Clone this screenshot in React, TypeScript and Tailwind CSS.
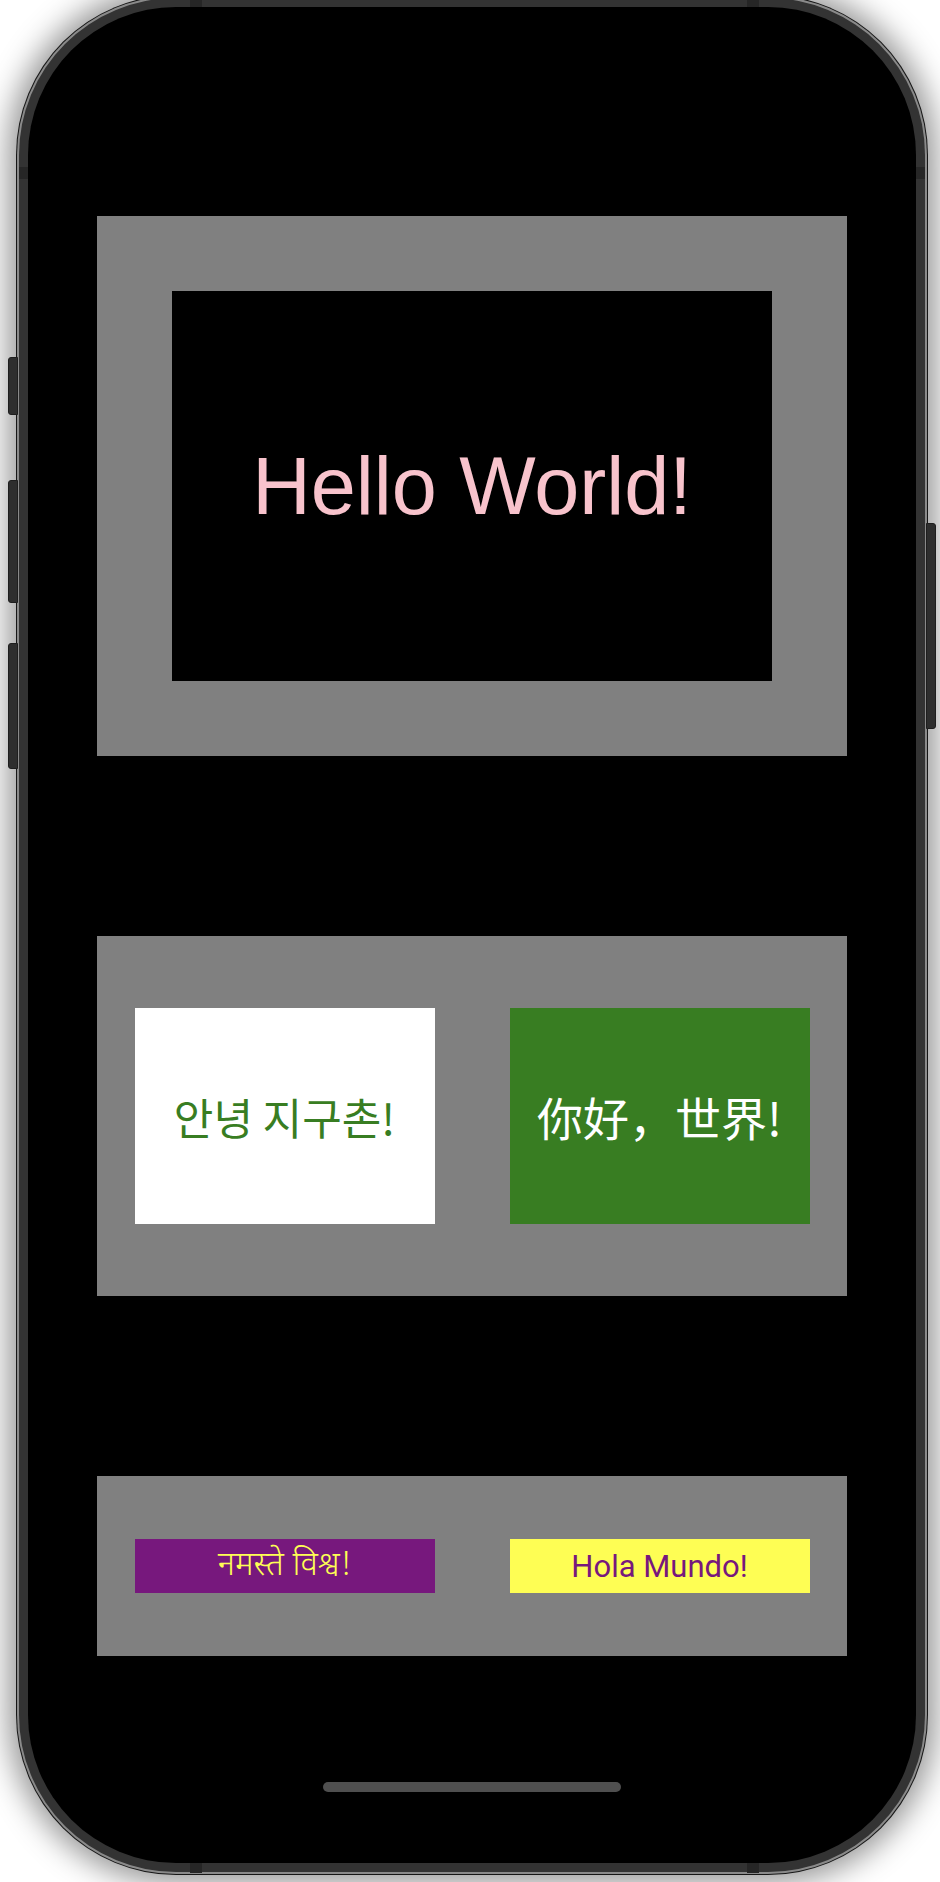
import React from 'react';

// gray panel wrapper shared by the three rows
const Panel = ({ className, children }: { className: string; children: React.ReactNode }) => (
  <div className={`w-[750px] bg-[#808080] ${className}`}>{children}</div>
);

const Screen = () => (
  <div className="flex h-full w-full flex-col items-center overflow-hidden rounded-[148px] bg-black pt-[209px]">
    <div className="flex flex-col gap-[180px]">
      <Panel className="h-[540px] p-[75px]">
        <div className="flex h-full w-full items-center justify-center bg-black">
          <span className="font-['Liberation_Sans',Arial,sans-serif] text-[81px] leading-none text-[#f8c3cc]">
            Hello World!
          </span>
        </div>
      </Panel>

      <Panel className="flex h-[360px] items-center justify-around">
        <div className="flex h-[216px] w-[300px] items-center justify-center bg-white">
          <span className="font-['Noto_Sans_CJK_KR',sans-serif] text-[43px] leading-none text-[#387d22]">
            안녕 지구촌!
          </span>
        </div>
        <div className="flex h-[216px] w-[300px] items-center justify-center bg-[#387d22]">
          <span className="font-['Noto_Sans_CJK_SC',sans-serif] text-[46px] leading-none text-white">
            你好，世界!
          </span>
        </div>
      </Panel>

      <Panel className="flex h-[180px] items-center justify-around">
        <div className="flex h-[54px] w-[300px] items-center justify-center bg-[#77187d]">
          <span className="font-['Noto_Sans_Devanagari','Noto_Sans',sans-serif] text-[33px] font-light leading-none text-[#fefe54]">
            नमस्ते विश्व!
          </span>
        </div>
        <div className="flex h-[54px] w-[300px] items-center justify-center bg-[#fefe54]">
          <span className="font-['Roboto',sans-serif] text-[31px] leading-none text-[#77187d]">
            Hola Mundo!
          </span>
        </div>
      </Panel>
    </div>

    <div className="mt-[126px] h-[10px] w-[298px] rounded-full bg-[#4f4f4f]" />
  </div>
);

export default function App() {
  return (
    <div className="relative h-[1882px] w-[940px] overflow-hidden bg-white">
      <div className="-mt-[5px] ml-[16px] h-[1880px] w-[912px] rounded-[160px] bg-[#161616] p-px shadow-[0_0_30px_8px_rgba(0,0,0,0.42)]">
        <div className="h-full w-full rounded-[159px] bg-[#8a8a8a] p-[2px]">
          <div className="h-full w-full rounded-[157px] bg-[#333333] p-[9px]">
            <Screen />
          </div>
        </div>
      </div>

      {/* antenna bands */}
      <div className="absolute left-[190px] top-0 h-[7px] w-[12px] bg-[#262626]" />
      <div className="absolute left-[747px] top-0 h-[7px] w-[12px] bg-[#262626]" />
      <div className="absolute left-[190px] top-[1863px] h-[10px] w-[12px] bg-[#262626]" />
      <div className="absolute left-[747px] top-[1863px] h-[10px] w-[12px] bg-[#262626]" />
      <div className="absolute left-[19px] top-[167px] h-[12px] w-[9px] bg-[#262626]" />
      <div className="absolute left-[916px] top-[167px] h-[12px] w-[9px] bg-[#262626]" />

      {/* side buttons */}
      <div className="absolute left-[8px] top-[357px] h-[58px] w-[10px] rounded-l-[3px] border border-[#1e1e1e] bg-[#2e2e2e]" />
      <div className="absolute left-[8px] top-[480px] h-[123px] w-[10px] rounded-l-[3px] border border-[#1e1e1e] bg-[#2e2e2e]" />
      <div className="absolute left-[8px] top-[643px] h-[126px] w-[10px] rounded-l-[3px] border border-[#1e1e1e] bg-[#2e2e2e]" />
      <div className="absolute left-[926px] top-[523px] h-[206px] w-[10px] rounded-r-[3px] border border-[#1e1e1e] bg-[#2e2e2e]" />
    </div>
  );
}
